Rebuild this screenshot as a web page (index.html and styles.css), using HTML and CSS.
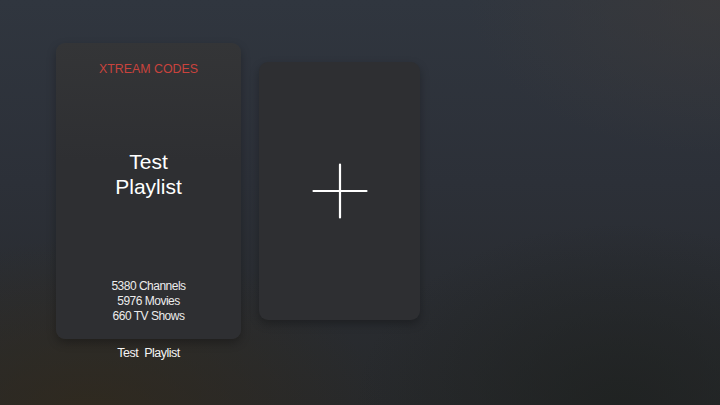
FILE: index.html
```html
<!DOCTYPE html>
<html>
<head>
<meta charset="utf-8">
<link rel="stylesheet" href="styles.css">
</head>
<body>
<div class="screen">
  <div class="shelf">
    <div class="card card-main">
      <div class="brand">XTREAM CODES</div>
      <div class="title">Test<br>Playlist</div>
      <div class="stats">
        <div>5380 Channels</div>
        <div>5976 Movies</div>
        <div>660 TV Shows</div>
      </div>
    </div>
    <div class="card card-add">
      <svg class="plus" width="56" height="56" viewBox="0 0 56 56">
        <path d="M28 1.5V54.5M1.5 28H54.5" stroke="#ffffff" stroke-width="2.2" stroke-linecap="round" fill="none"/>
      </svg>
    </div>
    <div class="label">Test&nbsp; Playlist</div>
  </div>
</div>
</body>
</html>
```
FILE: styles.css
```css
html, body {
  margin: 0;
  padding: 0;
  width: 720px;
  height: 405px;
  overflow: hidden;
}
body {
  font-family: "Liberation Sans", Arial, sans-serif;
  color: #ffffff;
}
.screen {
  width: 720px;
  height: 405px;
  box-sizing: border-box;
  padding: 43px 0 0 56px;
  background:
    radial-gradient(ellipse 420px 260px at 90px 420px, rgba(50, 42, 28, 0.8), rgba(50, 42, 28, 0) 70%),
    radial-gradient(ellipse 360px 220px at 720px 0px, rgba(60, 58, 58, 0.7), rgba(60, 58, 58, 0) 70%),
    radial-gradient(ellipse 380px 260px at 620px 405px, rgba(30, 33, 32, 0.8), rgba(30, 33, 32, 0) 70%),
    linear-gradient(180deg, #30363f 0%, #2c3038 45%, #27292b 100%);
}
.shelf {
  display: grid;
  grid-template-columns: 185px 161px;
  column-gap: 18px;
  align-items: center;
}
.card {
  border-radius: 9px;
  background: #2e2f32;
  box-shadow: 0 4px 10px rgba(0, 0, 0, 0.28);
}
.card-main {
  height: 296px;
  box-sizing: border-box;
  padding: 16px 10px 15px;
  display: flex;
  flex-direction: column;
  align-items: center;
  text-align: center;
  background: linear-gradient(180deg, #343537 0%, #2e2f32 40%, #2e2f32 100%);
}
.brand {
  font-size: 12.4px;
  line-height: 20px;
  color: #c9433d;
}
.title {
  margin-top: 70px;
  font-size: 21px;
  line-height: 25px;
}
.stats {
  margin-top: auto;
  font-size: 12px;
  line-height: 15px;
  letter-spacing: -0.5px;
  color: #ececec;
}
.card-add {
  height: 258px;
  display: flex;
  align-items: center;
  justify-content: center;
}
.plus {
  display: block;
}
.label {
  grid-column: 1;
  margin-top: 6px;
  text-align: center;
  font-size: 12.5px;
  line-height: 16px;
  letter-spacing: -0.5px;
  color: #f4f4f4;
}
```
